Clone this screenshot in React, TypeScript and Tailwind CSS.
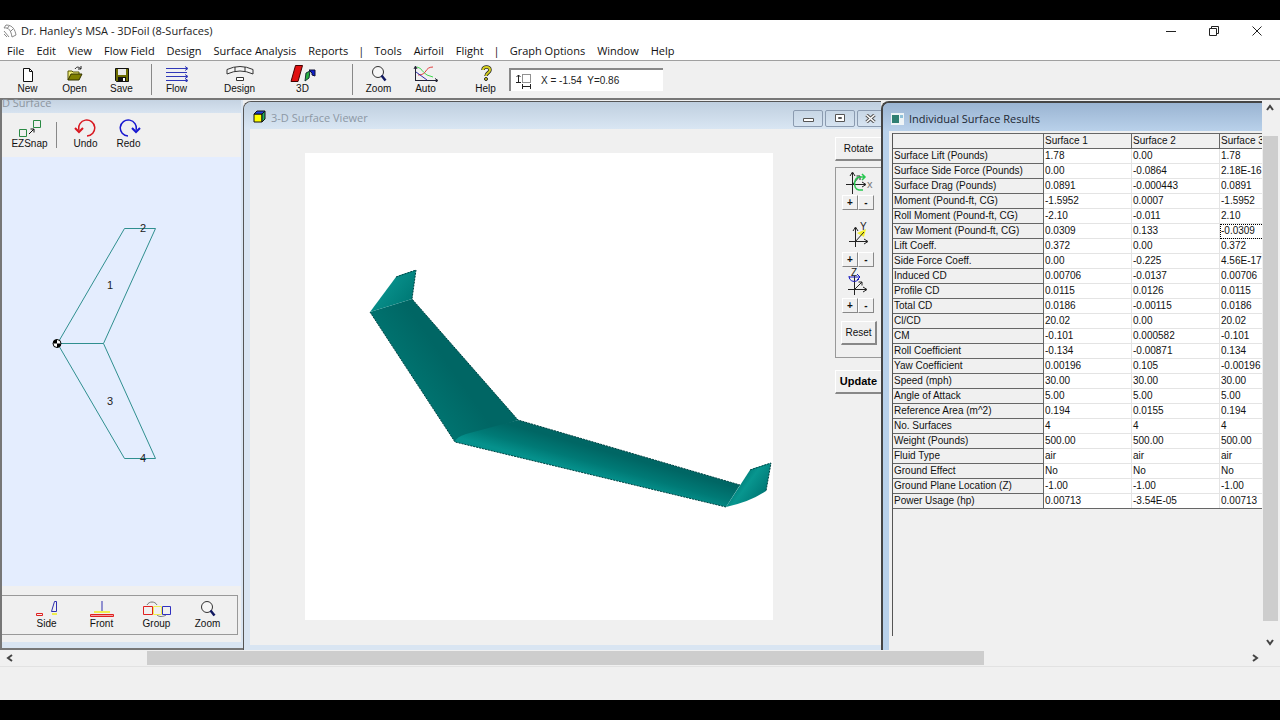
import { FC, ReactNode } from "react";

const menuItems = [
  "File",
  "Edit",
  "View",
  "Flow Field",
  "Design",
  "Surface Analysis",
  "Reports",
  "|",
  "Tools",
  "Airfoil",
  "Flight",
  "|",
  "Graph Options",
  "Window",
  "Help",
];

const columns = ["Surface 1", "Surface 2", "Surface 3"];

const rows = [
  ["Surface Lift (Pounds)", "1.78", "0.00", "1.78"],
  ["Surface Side Force (Pounds)", "0.00", "-0.0864", "2.18E-16"],
  ["Surface Drag (Pounds)", "0.0891", "-0.000443", "0.0891"],
  ["Moment (Pound-ft, CG)", "-1.5952", "0.0007", "-1.5952"],
  ["Roll Moment (Pound-ft, CG)", "-2.10", "-0.011", "2.10"],
  ["Yaw Moment (Pound-ft, CG)", "0.0309", "0.133", "-0.0309"],
  ["Lift Coeff.", "0.372", "0.00", "0.372"],
  ["Side Force Coeff.", "0.00", "-0.225", "4.56E-17"],
  ["Induced CD", "0.00706", "-0.0137", "0.00706"],
  ["Profile CD", "0.0115", "0.0126", "0.0115"],
  ["Total CD", "0.0186", "-0.00115", "0.0186"],
  ["Cl/CD", "20.02", "0.00", "20.02"],
  ["CM", "-0.101", "0.000582", "-0.101"],
  ["Roll Coefficient", "-0.134", "-0.00871", "0.134"],
  ["Yaw Coefficient", "0.00196", "0.105", "-0.00196"],
  ["Speed (mph)", "30.00", "30.00", "30.00"],
  ["Angle of Attack", "5.00", "5.00", "5.00"],
  ["Reference Area (m^2)", "0.194", "0.0155", "0.194"],
  ["No. Surfaces", "4", "4", "4"],
  ["Weight (Pounds)", "500.00", "500.00", "500.00"],
  ["Fluid Type", "air", "air", "air"],
  ["Ground Effect", "No", "No", "No"],
  ["Ground Plane Location (Z)", "-1.00", "-1.00", "-1.00"],
  ["Power Usage (hp)", "0.00713", "-3.54E-05", "0.00713"],
];

interface IconProps {
  width: number;
  height?: number;
  children: ReactNode;
}

const Icon: FC<IconProps> = ({ width, height = 18, children }) => (
  <svg
    width={width}
    height={height}
    viewBox={`0 0 ${width} ${height}`}
    fill="none"
    aria-hidden="true"
    className="shrink-0"
  >
    {children}
  </svg>
);

const NewIcon = () => (
  <Icon width={12}>
    <path d="M1.500 4.500h6l3 3v10h-9z" fill="#fff" stroke="#111" />
    <path d="M7.500 4.500v3h3" stroke="#111" />
  </Icon>
);

const OpenIcon = () => (
  <Icon width={16}>
    <path d="M1 16V7h4l1 1h6v3" fill="#f2ee7a" stroke="#555500" />
    <path d="M1 16l3-6h11l-3 6z" fill="#808000" stroke="#333300" />
    <path d="M8 5c2-3 4-2 6 0M14 2v3h-3" stroke="#222" />
  </Icon>
);

const SaveIcon = () => (
  <Icon width={14}>
    <path d="M.5 4.500h13v13h-12l-1-1z" fill="#6b6b00" stroke="#111" />
    <path d="M3 5h8v6H3z" fill="#e8e8e8" />
    <path d="M3 13h8v4H3z" fill="#111" />
    <path d="M8 14h2v3H8z" fill="#fff" />
  </Icon>
);

const FlowIcon = () => (
  <Icon width={24}>
    <path
      d="M1 4.500h21M1 8.500h21M1 12.500h21M1 16.500h21"
      stroke="#3038b8"
    />
    <path
      d="M20 2.500l3 2-3 2M20 10.500l3 2-3 2M20 14.500l3 2-3 2"
      stroke="#3038b8"
    />
  </Icon>
);

const DesignIcon = () => (
  <Icon width={28}>
    <path
      d="M1 5.500Q14-.5 27 5.500V10Q14 4 1 10zM9 3v4M19 3v4"
      fill="#f4f4f4"
      stroke="#333"
    />
    <path d="M10.500 13.500h7v3h-7z" fill="#fff" stroke="#333" />
  </Icon>
);

const ThreeDIcon = () => (
  <Icon width={26}>
    <path d="M5.500 1.500h7L8 17.500H1z" fill="#e01010" stroke="#400" />
    <path d="M16 9l4-2-1 7-4 3z" fill="#28b040" stroke="#133" />
    <path d="M19 6h6v6l-3-1v-2z" fill="#1020d0" stroke="#113" />
  </Icon>
);

const ZoomIcon = () => (
  <Icon width={16}>
    <circle cx="7" cy="8" r="5.500" fill="#f6f6f6" stroke="#333" />
    <path d="M10.500 11.500l4 5" stroke="#101860" strokeWidth="2.500" />
  </Icon>
);

const AutoIcon = () => (
  <Icon width={26}>
    <path d="M2.500 17V3M1 5l1.500-3L4 5M2 16.500h22M22 14.500l3 2-3 2" stroke="#223" />
    <path d="M4 3c5 1 5 5 10 8l6 2" stroke="#40d850" />
    <path d="M5 11c10 0 6-8 15-8" stroke="#e04040" />
    <path d="M3 8l11 8" stroke="#3030b0" />
  </Icon>
);

const HelpIcon = () => (
  <Icon width={12}>
    <path
      d="M3 6c0-4 7-4 7 0 0 3-4 2.500-4 6"
      stroke="#222"
      strokeWidth="3.500"
    />
    <path d="M3 6c0-4 7-4 7 0 0 3-4 2.500-4 6" stroke="#d6d020" strokeWidth="2" />
    <circle cx="6" cy="15" r="1.500" fill="#e6e020" stroke="#222" />
  </Icon>
);

const SnapIcon = () => (
  <Icon width={24}>
    <path d="M15.500 1.500h7v7h-7zM1.500 10.500h7v7h-7z" stroke="#2a8a44" />
    <path d="M11 15l5-5M12.500 10H16v3.500" stroke="#111" />
  </Icon>
);

const UndoIcon = () => (
  <Icon width={24}>
    <path d="M5 11a8 8 0 1 1 8 6" stroke="#d81820" strokeWidth="1.500" />
    <path d="M1 9l4 4 4-4" stroke="#d81820" strokeWidth="2" />
  </Icon>
);

const RedoIcon = () => (
  <Icon width={24}>
    <path d="M19 11a8 8 0 1 0-8 6" stroke="#1818d0" strokeWidth="1.500" />
    <path d="M15 9l4 4 4-4" stroke="#1818d0" strokeWidth="2" />
  </Icon>
);

const SideIcon = () => (
  <Icon width={24}>
    <path d="M1.500 14.500h6v2h-6z" stroke="#e02020" />
    <path d="M16.500 12.500l3-10h2v10z" stroke="#3030b0" />
    <path d="M17 15h5" stroke="#f0ee50" strokeWidth="2" />
  </Icon>
);

const FrontIcon = () => (
  <Icon width={24}>
    <path d="M12 2v10" stroke="#3030b0" />
    <path d="M4 13h16" stroke="#f0ee50" strokeWidth="2" />
    <path d="M.5 15.500h23v2H.5z" fill="#f0a0a0" stroke="#e02020" />
  </Icon>
);

const GroupIcon = () => (
  <Icon width={30}>
    <path d="M5 6c2-4 8-4 10 0M15 16c2 2 6 2 9 0" stroke="#777" />
    <path d="M1.500 7.500h9v8h-9z" stroke="#e02020" />
    <path d="M11.500 7.500h8v8h-8z" stroke="#f0ee50" />
    <path d="M20.500 7.500h8v8h-8z" stroke="#3030c0" />
  </Icon>
);

interface ToolButtonProps {
  label: string;
  icon: ReactNode;
}

const ToolButton: FC<ToolButtonProps> = ({ label, icon }) => (
  <button
    type="button"
    className="flex w-[47px] shrink-0 flex-col items-center text-[10px] leading-[14px] text-[#111]"
  >
    {icon}
    {label}
  </button>
);

const TitleBar = () => (
  <header className="flex h-[22px] items-center bg-white">
    <svg
      width="14"
      height="14"
      viewBox="0 0 14 14"
      fill="none"
      stroke="#888"
      className="ml-[3px]"
      aria-hidden="true"
    >
      <path d="M1 4c5-1 7 3 8 9M3 1c7 0 9 5 10 10M1 4l2-3M4 5l2-3M7 8l3-3M9 13l4-2M1 10l3 3M1 7l5 6" />
    </svg>
    <h1 className="ml-1 flex-1 text-[11px] text-[#222]">
      Dr. Hanley's MSA - 3DFoil (8-Surfaces)
    </h1>
    <div className="flex pr-[2px] text-[#222]">
      <button type="button" aria-label="Minimize" className="flex w-[43px] justify-center">
        <Icon width={10} height={10}>
          <path d="M0 5.500h10" stroke="currentColor" />
        </Icon>
      </button>
      <button type="button" aria-label="Restore" className="flex w-[43px] justify-center">
        <Icon width={10} height={10}>
          <path d="M.5 2.500h7v7h-7zM2.500 2V.5h7v7H8" stroke="currentColor" />
        </Icon>
      </button>
      <button type="button" aria-label="Close" className="flex w-[43px] justify-center">
        <Icon width={10} height={10}>
          <path d="M.5.5l9 9M9.500.5l-9 9" stroke="currentColor" />
        </Icon>
      </button>
    </div>
  </header>
);

const MenuBar = () => (
  <nav className="flex h-[19px] items-center gap-3 border-b border-[#a0a0a0] bg-white pl-[7px] text-[11px] text-[#111]">
    {menuItems.map((item, i) =>
      item === "|" ? (
        <span key={i} className="-mx-0.5">
          |
        </span>
      ) : (
        <button key={i} type="button" className="whitespace-nowrap">
          {item}
        </button>
      )
    )}
  </nav>
);

const Toolbar = () => (
  <div className="flex h-[39px] items-center border-b-2 border-[#777] bg-[#f0f0f0] font-['Liberation_Sans',Arial,sans-serif]">
    <div className="flex h-[31px] border-r border-[#888] pr-[6px] pl-1">
      <ToolButton label="New" icon={<NewIcon />} />
      <ToolButton label="Open" icon={<OpenIcon />} />
      <ToolButton label="Save" icon={<SaveIcon />} />
    </div>
    <div className="flex h-[31px] gap-4 border-r border-[#888] pr-[26px] pl-px">
      <ToolButton label="Flow" icon={<FlowIcon />} />
      <ToolButton label="Design" icon={<DesignIcon />} />
      <ToolButton label="3D" icon={<ThreeDIcon />} />
    </div>
    <div className="flex h-[31px] pl-[2px]">
      <ToolButton label="Zoom" icon={<ZoomIcon />} />
      <ToolButton label="Auto" icon={<AutoIcon />} />
    </div>
    <div className="flex h-[31px] pl-[13px]">
      <ToolButton label="Help" icon={<HelpIcon />} />
    </div>
    <div className="flex h-[23px] w-[154px] items-center gap-2 border-t-2 border-l-2 border-[#888] bg-white pl-1">
      <Icon width={18} height={16}>
        <path d="M3.500 9V2M1.500 4l2-2 2 2M1 9.500h5M7.500 13.500h8M7.500 11v5M15.500 11v5" stroke="#222" />
        <path d="M7.500 1.500h8v8h-8z" stroke="#222" strokeDasharray="1 1" />
      </Icon>
      <input
        type="text"
        readOnly
        aria-label="Cursor position"
        value="X = -1.54  Y=0.86"
        className="w-full min-w-0 text-[10px] text-[#222] outline-none"
      />
    </div>
  </div>
);

const PlanformPanel = () => (
  <section className="flex w-[243px] shrink-0 flex-col border-b-2 border-l-2 border-[#777] bg-[#d9e5f2] pr-[2px] pb-[6px]">
    <h2 className="h-[13px] bg-linear-to-b from-[#c5d3e2] to-[#d7e3f0] text-[11px] leading-[6px] text-[#8d96a0]">
      D Surface
    </h2>
    <div className="flex h-11 items-center bg-[#f0f0f0] pl-1 font-['Liberation_Sans',Arial,sans-serif]">
      <ToolButton label="EZSnap" icon={<SnapIcon />} />
      <div className="mr-[5px] ml-[3px] h-[26px] w-px bg-[#888]" />
      <ToolButton label="Undo" icon={<UndoIcon />} />
      <div className="-ml-1 flex">
        <ToolButton label="Redo" icon={<RedoIcon />} />
      </div>
    </div>
    <div className="flex-1 bg-[#e4edfe]">
      <svg
        viewBox="2 157 239 429"
        className="block h-[429px] w-full font-['Liberation_Sans',Arial,sans-serif]"
        fill="none"
        stroke="#2f8f8f"
      >
        <path d="M57.500 343.500L124.500 228.500H155.500L103.500 343.500z" />
        <path d="M57.500 343.500L124.500 458.500H155.500L103.500 343.500" />
        <g fill="#222" stroke="none" fontSize="11" textAnchor="middle">
          <text x="110" y="289">1</text>
          <text x="143" y="232">2</text>
          <text x="110" y="405">3</text>
          <text x="143" y="462">4</text>
        </g>
        <circle cx="57" cy="343.500" r="4" fill="#fff" stroke="#000" />
        <path d="M57 343.500v-4a4 4 0 0 0-4 4zM57 343.500v4a4 4 0 0 0 4-4z" fill="#000" stroke="none" />
      </svg>
    </div>
    <div className="bg-[#f0f0f0] pt-[9px] pb-[7px]">
      <div className="mr-[3px] flex h-10 items-center gap-2 border-y border-r border-[#999] pl-[21px] font-['Liberation_Sans',Arial,sans-serif]">
        <ToolButton label="Side" icon={<SideIcon />} />
        <ToolButton label="Front" icon={<FrontIcon />} />
        <ToolButton label="Group" icon={<GroupIcon />} />
        <div className="-ml-1 flex">
          <ToolButton label="Zoom" icon={<ZoomIcon />} />
        </div>
      </div>
    </div>
  </section>
);

const Wing = () => (
  <svg viewBox="305 153 468 467" className="block h-full w-full">
    <defs>
      <linearGradient id="leftWing" gradientUnits="userSpaceOnUse" x1="400" y1="380" x2="440" y2="352">
        <stop offset="0" stopColor="#007672" />
        <stop offset="1" stopColor="#006664" />
      </linearGradient>
      <linearGradient id="rightWing" gradientUnits="userSpaceOnUse" x1="590" y1="474" x2="600" y2="438">
        <stop offset="0" stopColor="#05918c" />
        <stop offset="0.300" stopColor="#007a76" />
        <stop offset="0.700" stopColor="#006664" />
      </linearGradient>
      <linearGradient id="leftTip" gradientUnits="userSpaceOnUse" x1="382" y1="290" x2="402" y2="306">
        <stop offset="0" stopColor="#088f8a" />
        <stop offset="1" stopColor="#007c78" />
      </linearGradient>
      <linearGradient id="rightTip" gradientUnits="userSpaceOnUse" x1="736" y1="484" x2="758" y2="500">
        <stop offset="0" stopColor="#007d79" />
        <stop offset="0.350" stopColor="#08968f" />
        <stop offset="1" stopColor="#007a77" />
      </linearGradient>
    </defs>
    <path
      d="M370 312L412 299L518 420L455 442z"
      fill="url(#leftWing)"
    />
    <path d="M370 312L396 277Q399 275 416 270L412 299z" fill="url(#leftTip)" />
    <path d="M455 442Q456 437 466 434L518 420L740 485L726 507z" fill="url(#rightWing)" />
    <path d="M726 507L750 470Q752 468 771 463L766 491Q750 502 726 507z" fill="url(#rightTip)" />
    <path
      d="M370 312L455 442L726 507M396 277L416 270L412 299L518 420L740 485M750 470L771 463L766 491"
      fill="none"
      stroke="#044"
      strokeDasharray="2 1"
    />
  </svg>
);

const stepButton =
  "h-[15px] w-4 border border-t-white border-l-white border-r-[#888] border-b-[#888] text-[10px] leading-3 font-bold";

interface AxisControlProps {
  axis: string;
  icon: ReactNode;
}

const AxisControl: FC<AxisControlProps> = ({ axis, icon }) => (
  <div className="pl-[6px]">
    {icon}
    <div className="flex">
      <button type="button" aria-label={`Rotate ${axis} forward`} className={stepButton}>
        +
      </button>
      <button type="button" aria-label={`Rotate ${axis} back`} className={stepButton}>
        -
      </button>
    </div>
  </div>
);

const ViewerControls = () => (
  <div className="mt-2 w-[46px] shrink-0 overflow-hidden font-['Liberation_Sans',Arial,sans-serif] text-[10px] text-[#111]">
    <button
      type="button"
      className="h-6 w-full border-t border-b-2 border-l border-t-white border-b-[#888] border-l-white whitespace-nowrap"
    >
      Rotate
    </button>
    <div className="mt-[6px] h-[191px] border-y border-l border-[#999] pt-[2px]">
      <AxisControl
        axis="X"
        icon={
          <Icon width={34} height={25}>
            <path d="M10.500 24V3M8 6l2.500-4L13 6M4 14.500h19M20 12l4 2.500-4 2.500M10 15l8-9M14.500 6H18v4" stroke="#222" />
            <path d="M18 7c-6-1-8 12-1 13h4M17 7h5M20 4l3 3-3 3" stroke="#28c850" strokeWidth="1.500" />
            <text x="25" y="18" fontSize="11" fill="#777">x</text>
          </Icon>
        }
      />
      <AxisControl
        axis="Y"
        icon={
          <Icon width={34} height={42}>
            <path d="M15 23l9-4-2 8z" fill="#f4f030" />
            <path d="M13.500 37V18M11 21l2.500-4 2.500 4M7 31.500h18M22 29l4 2.500-4 2.500M13 32l9-10" stroke="#222" />
            <text x="18" y="20" fontSize="10" fill="#222">Y</text>
          </Icon>
        }
      />
      <AxisControl
        axis="Z"
        icon={
          <Icon width={34} height={31}>
            <path d="M12.500 28V9M6 22.500h18M21 20l4 2.500-4 2.500M12 23l8-8M16.500 15H20v3.500" stroke="#222" />
            <path d="M7 9c0 6 7 7 10 3M7 10h11M15 7l3 3-3 3" stroke="#1818c0" />
            <text x="9" y="9" fontSize="10" fill="#222">Z</text>
          </Icon>
        }
      />
      <button
        type="button"
        className="mt-2 ml-[5px] h-6 w-9 border border-r-2 border-b-2 border-t-white border-r-[#888] border-b-[#888] border-l-white whitespace-nowrap"
      >
        Reset
      </button>
    </div>
    <button
      type="button"
      className="mt-3 flex h-6 w-full items-center justify-center border-t border-b-2 border-l border-t-white border-b-[#888] border-l-white text-[11px] font-bold text-black"
    >
      Update
    </button>
  </div>
);

const frameButton =
  "flex h-[17px] w-[30px] shrink-0 items-center justify-center rounded-[2px] border border-[#8b9bb0]";

const ViewerWindow = () => (
  <section className="mt-px flex min-w-0 flex-1 flex-col rounded-tl-lg border-t border-l border-[#555] bg-[#d9e5f2] pb-[5px] pl-[6px]">
    <div className="-ml-[6px] flex h-[27px] items-center overflow-hidden rounded-tl-lg bg-linear-to-b from-[#bfcfdf] to-[#d9e6f3] pt-[6px] pl-[9px]">
      <svg width="13" height="13" viewBox="0 0 13 13" aria-hidden="true" className="mb-1">
        <path d="M1 4h8v8H1z" fill="#ff0" stroke="#111" />
        <path d="M1 4l3-3h8L9 4z" fill="#2040e0" stroke="#111" />
        <path d="M9 4l3-3v8l-3 3z" fill="#20b060" stroke="#111" />
      </svg>
      <h2 className="ml-[5px] flex-1 text-[11px] text-[#8d98a5]">3-D Surface Viewer</h2>
      <div className="flex gap-[2px] overflow-hidden">
        <button type="button" aria-label="Minimize viewer" className={frameButton}>
          <Icon width={11} height={9}>
            <path d="M.5 4.500h10v3H.5z" fill="#fff" stroke="#555" />
          </Icon>
        </button>
        <button type="button" aria-label="Maximize viewer" className={frameButton}>
          <Icon width={11} height={9}>
            <path d="M.5.5h9v7h-9zM3.500 3.500h3v1h-3z" fill="#fff" stroke="#555" />
          </Icon>
        </button>
        <button
          type="button"
          aria-label="Close viewer"
          className="-mr-[6px] flex h-[17px] w-[30px] shrink-0 items-center justify-center rounded-[2px] border border-[#8b9bb0] pr-1"
        >
          <Icon width={11} height={9}>
            <path d="M1.500 1l8 7M9.500 1l-8 7" stroke="#555" strokeWidth="3.500" />
            <path d="M1.500 1l8 7M9.500 1l-8 7" stroke="#fff" strokeWidth="1.500" />
          </Icon>
        </button>
      </div>
    </div>
    <div className="flex min-h-0 flex-1 bg-[#f0f0f0]">
      <div className="mt-6 mr-[62px] mb-[25px] ml-[55px] min-w-0 flex-1 bg-white">
        <Wing />
      </div>
      <ViewerControls />
    </div>
  </section>
);

const ResultsTable = () => (
  <table className="-ml-px w-[416px] table-fixed border-collapse border-b border-[#666] text-left font-['Liberation_Sans',Arial,sans-serif] text-[10px] leading-[14px] text-[#111]">
    <colgroup>
      <col className="w-[151px]" />
      <col className="w-[88px]" />
      <col className="w-[88px]" />
      <col className="w-[88px]" />
    </colgroup>
    <thead>
      <tr className="h-[15px]">
        <td className="border border-[#666] p-0" />
        {columns.map((column) => (
          <th key={column} scope="col" className="border border-[#666] p-0 pl-px font-normal">
            {column}
          </th>
        ))}
      </tr>
    </thead>
    <tbody>
      {rows.map(([label, ...values], row) => (
        <tr key={label} className="h-[15px]">
          <th
            scope="row"
            className="border border-[#666] p-0 pl-px font-normal whitespace-nowrap"
          >
            {label}
          </th>
          {values.map((value, i) => (
            <td
              key={i}
              className={
                value === "-0.0309"
                  ? "border-r border-b border-[#e4e4e4] bg-white p-0 pl-px outline-1 -outline-offset-1 outline-black outline-dotted"
                  : row === rows.length - 1
                    ? "border-r border-b border-r-[#e4e4e4] border-b-[#666] bg-white p-0 pl-px"
                    : "border-r border-b border-[#e4e4e4] bg-white p-0 pl-px"
              }
            >
              {value}
            </td>
          ))}
        </tr>
      ))}
    </tbody>
  </table>
);

const ResultsWindow = () => (
  <section className="mt-px flex w-[381px] shrink-0 flex-col overflow-hidden rounded-tl-lg border-t-2 border-l-2 border-[#444] bg-[#b9d1ea] pl-[6px]">
    <div className="-ml-[6px] flex h-7 items-center bg-linear-to-b from-[#9ab4d2] to-[#b9d1ea] pt-1 pl-2">
      <svg width="13" height="12" viewBox="0 0 13 12" aria-hidden="true">
        <path d="M0 0h13v12H0z" fill="#eef4f6" />
        <path d="M1 2h7v8H1z" fill="#2f7f72" />
        <path d="M9 2h3v3H9z" fill="#8fc0d8" />
      </svg>
      <h2 className="ml-[5px] text-[11px] text-[#1c2733]">Individual Surface Results</h2>
    </div>
    <div className="flex-1 bg-[#f0f0f0] pt-[2px] pb-[14px] pl-[3px]">
      <div className="h-full overflow-hidden border-l border-[#555]">
        <ResultsTable />
      </div>
    </div>
  </section>
);

interface ArrowProps {
  label: string;
  d: string;
}

const ScrollArrow: FC<ArrowProps> = ({ label, d }) => (
  <button type="button" aria-label={label} className="flex size-4 shrink-0 items-center justify-center">
    <Icon width={8} height={8}>
      <path d={d} stroke="#444" strokeWidth="2" />
    </Icon>
  </button>
);

export default function App() {
  return (
    <div className="flex min-h-screen flex-col bg-black py-5 font-['Open_Sans','Noto_Sans',sans-serif]">
      <TitleBar />
      <MenuBar />
      <Toolbar />
      <main className="flex flex-1 bg-[#f0f0f0]">
        <PlanformPanel />
        <ViewerWindow />
        <ResultsWindow />
        <div className="mr-[2px] flex w-4 shrink-0 flex-col">
          <ScrollArrow label="Scroll up" d="M1 6l3-4 3 4" />
          <div className="flex flex-1 flex-col pt-5 pb-[13px]">
            <div className="ml-px flex-1 bg-[#cdcdcd]" />
          </div>
          <ScrollArrow label="Scroll down" d="M1 2l3 4 3-4" />
        </div>
      </main>
      <div className="flex h-[17px] items-center border-b border-[#e2e2e2] bg-[#f0f0f0] pr-[17px] pl-[2px]">
        <ScrollArrow label="Scroll left" d="M6 1L2 4l4 3" />
        <div className="flex h-[14px] flex-1">
          <div className="flex-129" />
          <div className="flex-837 bg-[#cdcdcd]" />
          <div className="flex-263" />
        </div>
        <ScrollArrow label="Scroll right" d="M2 1l4 3-4 3" />
      </div>
      <footer className="h-[33px] bg-[#f0f0f0]" />
    </div>
  );
}
